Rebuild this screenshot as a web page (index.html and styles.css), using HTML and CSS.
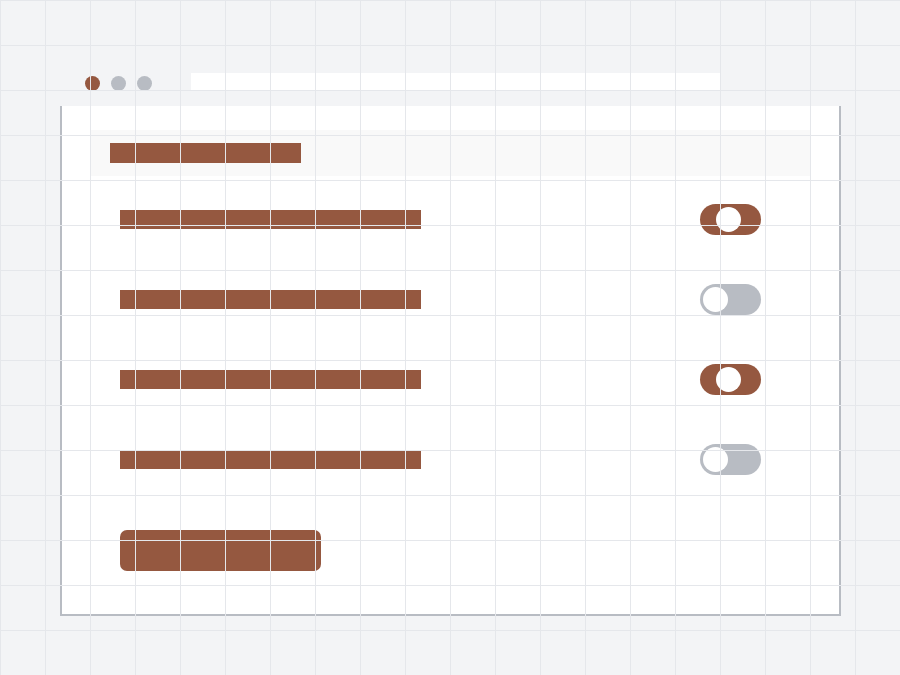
FILE: index.html
```html
<!DOCTYPE html>
<html lang="en">
<head>
  <meta charset="UTF-8">
  <meta name="viewport" content="width=device-width, initial-scale=1.0">
  <title>Settings Wireframe</title>
  <link rel="stylesheet" href="styles.css">
</head>
<body>
  <div class="page">
    <div class="chrome">
      <div class="dots">
        <span class="dot dot-active"></span>
        <span class="dot"></span>
        <span class="dot"></span>
      </div>
      <div class="address"></div>
    </div>

    <div class="window">
      <div class="header">
        <div class="bar bar-title"></div>
      </div>

      <div class="rows">
        <div class="row">
          <div class="bar bar-label"></div>
          <div class="toggle on"><span class="knob"></span></div>
        </div>
        <div class="row">
          <div class="bar bar-label"></div>
          <div class="toggle"><span class="knob"></span></div>
        </div>
        <div class="row">
          <div class="bar bar-label"></div>
          <div class="toggle on"><span class="knob"></span></div>
        </div>
        <div class="row">
          <div class="bar bar-label"></div>
          <div class="toggle"><span class="knob"></span></div>
        </div>
      </div>

      <div class="actions">
        <div class="button"></div>
      </div>
    </div>
  </div>

  <!-- blueprint grid drawn over everything -->
  <div class="grid"></div>
</body>
</html>
```

FILE: styles.css
```css
body {
  margin: 0;
  background-color: #f3f4f6;
  font-family: "Liberation Sans", Arial, sans-serif;
}
.page {
  padding: 60px 0 0 60px;
}
.chrome {
  display: flex;
  align-items: center;
  height: 46px;
  padding-left: 25px;
}
.dots {
  display: flex;
  gap: 11px;
}
.dot {
  width: 15px;
  height: 15px;
  border-radius: 50%;
  background: #b8bcc3;
}
.dot-active {
  background: #955840;
}
.address {
  width: 529px;
  height: 18px;
  margin-left: 39px;
  margin-top: -2px;
  background: #fff;
}
.window {
  box-sizing: border-box;
  width: 781px;
  height: 510px;
  background: #fff;
  border: 2px solid #b8bcc3;
  border-top: none;
  padding: 24px 29px 0 28px;
}
.header {
  background: #f9f9f9;
  height: 46px;
  box-sizing: border-box;
  padding: 13px 20px;
}
.bar {
  background: #955840;
}
.bar-title {
  width: 191px;
  height: 20px;
}
.rows {
  display: flex;
  flex-direction: column;
  gap: 50px;
  margin: 28px 49px 0 30px;
}
.row {
  display: flex;
  align-items: center;
  justify-content: space-between;
  height: 30px;
}
.bar-label {
  width: 301px;
  height: 19px;
  margin-top: 1px;
}
.toggle {
  box-sizing: border-box;
  display: flex;
  align-items: center;
  width: 61px;
  height: 31px;
  padding-left: 3px;
  border-radius: 16px;
  background: #b8bcc3;
}
.toggle.on {
  background: #955840;
  padding-left: 16px;
}
.knob {
  width: 25px;
  height: 25px;
  border-radius: 50%;
  background: #fff;
}
.actions {
  margin: 56px 0 0 30px;
}
.button {
  width: 201px;
  height: 41px;
  border-radius: 7px;
  background: #955840;
}
.grid {
  position: fixed;
  inset: 0;
  pointer-events: none;
  background-image:
    linear-gradient(to right, #e5e7eb 1px, transparent 1px),
    linear-gradient(to bottom, #e5e7eb 1px, transparent 1px);
  background-size: 45px 45px;
}
```
